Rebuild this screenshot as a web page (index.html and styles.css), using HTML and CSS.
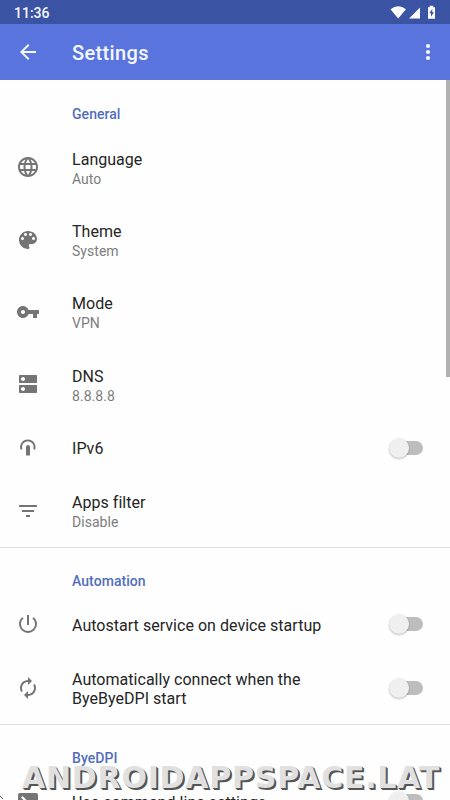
FILE: index.html
```html
<!DOCTYPE html>
<html lang="en">
<head>
<meta charset="utf-8">
<title>Settings</title>
<link rel="stylesheet" href="styles.css">
</head>
<body>
<div class="screen">
  <div class="status"><span>11:36</span>
    <svg class="status-icons" viewBox="0 0 48 20"><path d="M0.5 4.2Q8.2-1.8 16 4.2L8.2 13.5zM19 13.5h11V2.5z"/><path fill-rule="evenodd" d="M39.7.8h3.6v1.4H45v11.6h-7V2.200h1.700zM42.300 4l-3 4.300h1.700v3.500l3-4.500h-1.700z"/></svg>
  </div>
  <header class="bar">
    <svg class="icon" viewBox="0 0 24 24"><path d="M20 11H7.830l5.590-5.590L12 4l-8 8 8 8 1.410-1.410L7.830 13H20z"/></svg>
    <h1>Settings</h1>
    <svg class="icon" viewBox="0 0 24 24"><circle cx="12" cy="6" r="2.100"/><circle cx="12" cy="12" r="2.100"/><circle cx="12" cy="18" r="2.100"/></svg>
  </header>
  <main>
    <section>
      <h2>General</h2>
      <div class="row">
        <svg class="icon" viewBox="0 0 24 24"><path d="M11.990 2C6.470 2 2 6.480 2 12s4.470 10 9.990 10C17.520 22 22 17.520 22 12S17.520 2 11.990 2zm6.930 6h-2.950c-.32-1.250-.78-2.450-1.380-3.560 1.840.63 3.370 1.910 4.330 3.560zM12 4.040c.83 1.200 1.480 2.530 1.910 3.960h-3.820c.43-1.430 1.080-2.760 1.910-3.960zM4.260 14C4.100 13.360 4 12.690 4 12s.1-1.360.26-2h3.380c-.08.66-.14 1.320-.14 2s.06 1.340.14 2H4.260zm.82 2h2.950c.32 1.250.78 2.450 1.380 3.560-1.840-.63-3.370-1.900-4.330-3.560zm2.950-8H5.080c.96-1.660 2.490-2.930 4.330-3.560C8.810 5.550 8.350 6.750 8.030 8zM12 19.960c-.83-1.200-1.480-2.530-1.910-3.960h3.820c-.43 1.430-1.080 2.760-1.910 3.960zM14.340 14H9.660c-.09-.66-.16-1.320-.16-2s.07-1.350.16-2h4.680c.09.65.16 1.320.16 2s-.07 1.340-.16 2zm.25 5.560c.6-1.110 1.060-2.310 1.380-3.560h2.950c-.96 1.650-2.490 2.930-4.330 3.560zM16.360 14c.08-.66.14-1.320.14-2s-.06-1.340-.14-2h3.380c.16.64.26 1.310.26 2s-.1 1.360-.26 2h-3.380z"/></svg>
        <div class="label"><b>Language</b><small>Auto</small></div>
      </div>
      <div class="row">
        <svg class="icon" viewBox="0 0 24 24"><path d="M12 3c-4.970 0-9 4.030-9 9s4.030 9 9 9c.83 0 1.500-.67 1.500-1.500 0-.39-.15-.74-.39-1.010-.23-.26-.38-.61-.38-.99 0-.83.67-1.500 1.500-1.500H16c2.760 0 5-2.240 5-5 0-4.420-4.030-8-9-8zm-5.500 9c-.83 0-1.500-.67-1.500-1.500S5.670 9 6.500 9 8 9.670 8 10.500 7.330 12 6.500 12zm3-4C8.670 8 8 7.330 8 6.500S8.670 5 9.500 5s1.500.67 1.500 1.500S10.330 8 9.500 8zm5 0c-.83 0-1.500-.67-1.500-1.500S13.670 5 14.500 5s1.500.67 1.500 1.500S15.330 8 14.500 8zm3 4c-.83 0-1.500-.67-1.500-1.500S16.670 9 17.500 9s1.500.67 1.500 1.500-.67 1.500-1.500 1.500z"/></svg>
        <div class="label"><b>Theme</b><small>System</small></div>
      </div>
      <div class="row">
        <svg class="icon" viewBox="0 0 24 24"><path d="M12.650 10C11.830 7.670 9.610 6 7 6c-3.310 0-6 2.690-6 6s2.690 6 6 6c2.610 0 4.830-1.670 5.650-4H17v4h4v-4h2v-4H12.650zM7 14c-1.100 0-2-.9-2-2s.9-2 2-2 2 .9 2 2-.9 2-2 2z"/></svg>
        <div class="label"><b>Mode</b><small>VPN</small></div>
      </div>
      <div class="row">
        <svg class="icon" viewBox="0 0 24 24"><path d="M20 13H4c-.55 0-1 .45-1 1v6c0 .55.45 1 1 1h16c.55 0 1-.45 1-1v-6c0-.55-.45-1-1-1zM7 19c-1.100 0-2-.9-2-2s.9-2 2-2 2 .9 2 2-.9 2-2 2zM20 3H4c-.55 0-1 .45-1 1v6c0 .55.45 1 1 1h16c.55 0 1-.45 1-1V4c0-.55-.45-1-1-1zM7 9c-1.100 0-2-.9-2-2s.9-2 2-2 2 .9 2 2-.9 2-2 2z"/></svg>
        <div class="label"><b>DNS</b><small>8.8.8.8</small></div>
      </div>
      <div class="row short">
        <svg class="icon" viewBox="0 0 24 24"><path class="line" d="M5.400 13.500A6.800 6.800 0 1 1 18.200 13.500"/><path d="M10 19.500v-8.800q0-1.700 2-1.700t2 1.700v8.800z"/></svg>
        <div class="label"><b>IPv6</b></div><i class="switch"></i>
      </div>
      <div class="row">
        <svg class="icon" viewBox="0 0 24 24"><path d="M10 18h4v-2h-4zM3 6v2h18V6zm3 7h12v-2H6z"/></svg>
        <div class="label"><b>Apps filter</b><small>Disable</small></div>
      </div>
    </section>
    <section>
      <h2>Automation</h2>
      <div class="row short">
        <svg class="icon" viewBox="0 0 24 24"><path d="M13 3h-2v10h2zm4.830 2.170-1.420 1.420A6.920 6.920 0 0 1 19 12c0 3.870-3.130 7-7 7s-7-3.130-7-7c0-2.190 1.010-4.140 2.580-5.420L6.170 5.170A8.930 8.930 0 0 0 3 12a9 9 0 0 0 18 0c0-2.740-1.230-5.180-3.170-6.830z"/></svg>
        <div class="label"><b>Autostart service on device startup</b></div><i class="switch"></i>
      </div>
      <div class="row">
        <svg class="icon" viewBox="0 0 24 24"><path d="M12 6v3l4-4-4-4v3c-4.420 0-8 3.580-8 8 0 1.570.46 3.030 1.240 4.260L6.700 14.800A5.870 5.870 0 0 1 6 12c0-3.310 2.690-6 6-6zm6.760 1.740L17.300 9.200c.44.84.7 1.790.7 2.800 0 3.310-2.690 6-6 6v-3l-4 4 4 4v-3c4.420 0 8-3.580 8-8 0-1.570-.46-3.030-1.240-4.260z"/></svg>
        <div class="label"><b>Automatically connect when the ByeByeDPI start</b></div><i class="switch"></i>
      </div>
    </section>
    <section>
      <h2>ByeDPI</h2>
      <div class="row short">
        <svg class="icon" viewBox="0 0 24 24"><path fill-rule="evenodd" d="M4 4h16q2 0 2 2v14q0 2-2 2H4q-2 0-2-2V6q0-2 2-2zm2.500 3L5 8.500 8.500 12 5 15.500 6.500 17l5-5z"/></svg>
        <div class="label"><b>Use command line settings</b></div><i class="switch"></i>
      </div>
    </section>
  </main>
  <div class="scrollbar"></div>
  <svg class="corner" viewBox="0 0 4 4"><path d="M0 0L3 3"/></svg>
  <div class="watermark">ANDROIDAPPSPACE.LAT</div>
</div>
</body>
</html>
```

FILE: styles.css
```css
* { box-sizing: border-box; }
body { margin: 0; font-family: Roboto, sans-serif; background: #fff; }
.screen { position: relative; width: 450px; height: 800px; overflow: hidden; background: #fefefe; }
.status { height: 24px; background: #3b53a3; color: #f4f7ff; display: flex; justify-content: space-between; align-items: center; padding: 2px 12px 0 14px; font-size: 14px; font-weight: 500; line-height: 20px; }
.status-icons { width: 48px; height: 20px; fill: #fff; margin-top: 3px; }
.bar { height: 56px; display: flex; align-items: center; padding: 0 10px 0 16px; background: #5975dd; color: #f4f7ff; }
.bar h1 { flex: 1; margin: 2px 0 0 32px; font-size: 20px; font-weight: 500; letter-spacing: .35px; }
.icon { width: 24px; height: 24px; flex: none; fill: #747474; }
.bar .icon { fill: #f4f7ff; }
.icon .line { fill: none; stroke: #747474; stroke-width: 1.8; }
section + section { border-top: 1px solid #dedede; }
h2 { margin: 0; height: 51px; padding: 24px 0 0 72px; font-size: 14px; line-height: 20px; font-weight: 500; color: #536dbd; letter-spacing: .05px; }
section + section h2 { height: 49.500px; padding-top: 23px; }
.row { height: 72.4px; display: flex; align-items: center; padding: 0 27px 0 16px; }
.row.short { height: 54px; }
.label { margin: 3px 0 0 32px; flex: 1; max-width: 260px; }
.row.short .label { margin-top: 2px; }
.label b { display: block; font-weight: 400; font-size: 16px; line-height: 19px; color: #252525; letter-spacing: .03px; }
.label small { display: block; font-size: 14px; line-height: 17px; margin-top: 2px; color: #7d7d7d; letter-spacing: .04px; }
.switch { position: relative; margin-left: auto; width: 30px; height: 14px; border-radius: 7px; background: #bdbdbd; }
.switch::after { content: ""; position: absolute; left: -4px; top: -3px; width: 20px; height: 20px; border-radius: 50%; background: #efefef; box-shadow: 0 1px 2px #0004; }
.scrollbar { position: absolute; right: 0; top: 80px; width: 4px; height: 297px; background: #b1b1b1; }
.corner { position: absolute; left: 0; bottom: 0; width: 4px; height: 4px; fill: none; stroke: #555; }
.watermark { position: absolute; left: 22px; top: 760px; font: bold 30px/36px "DejaVu Sans", sans-serif; color: #e0e0e0; text-shadow: 1px 1px #555, 2px 2px #555; white-space: nowrap; letter-spacing: .77px; }
```
